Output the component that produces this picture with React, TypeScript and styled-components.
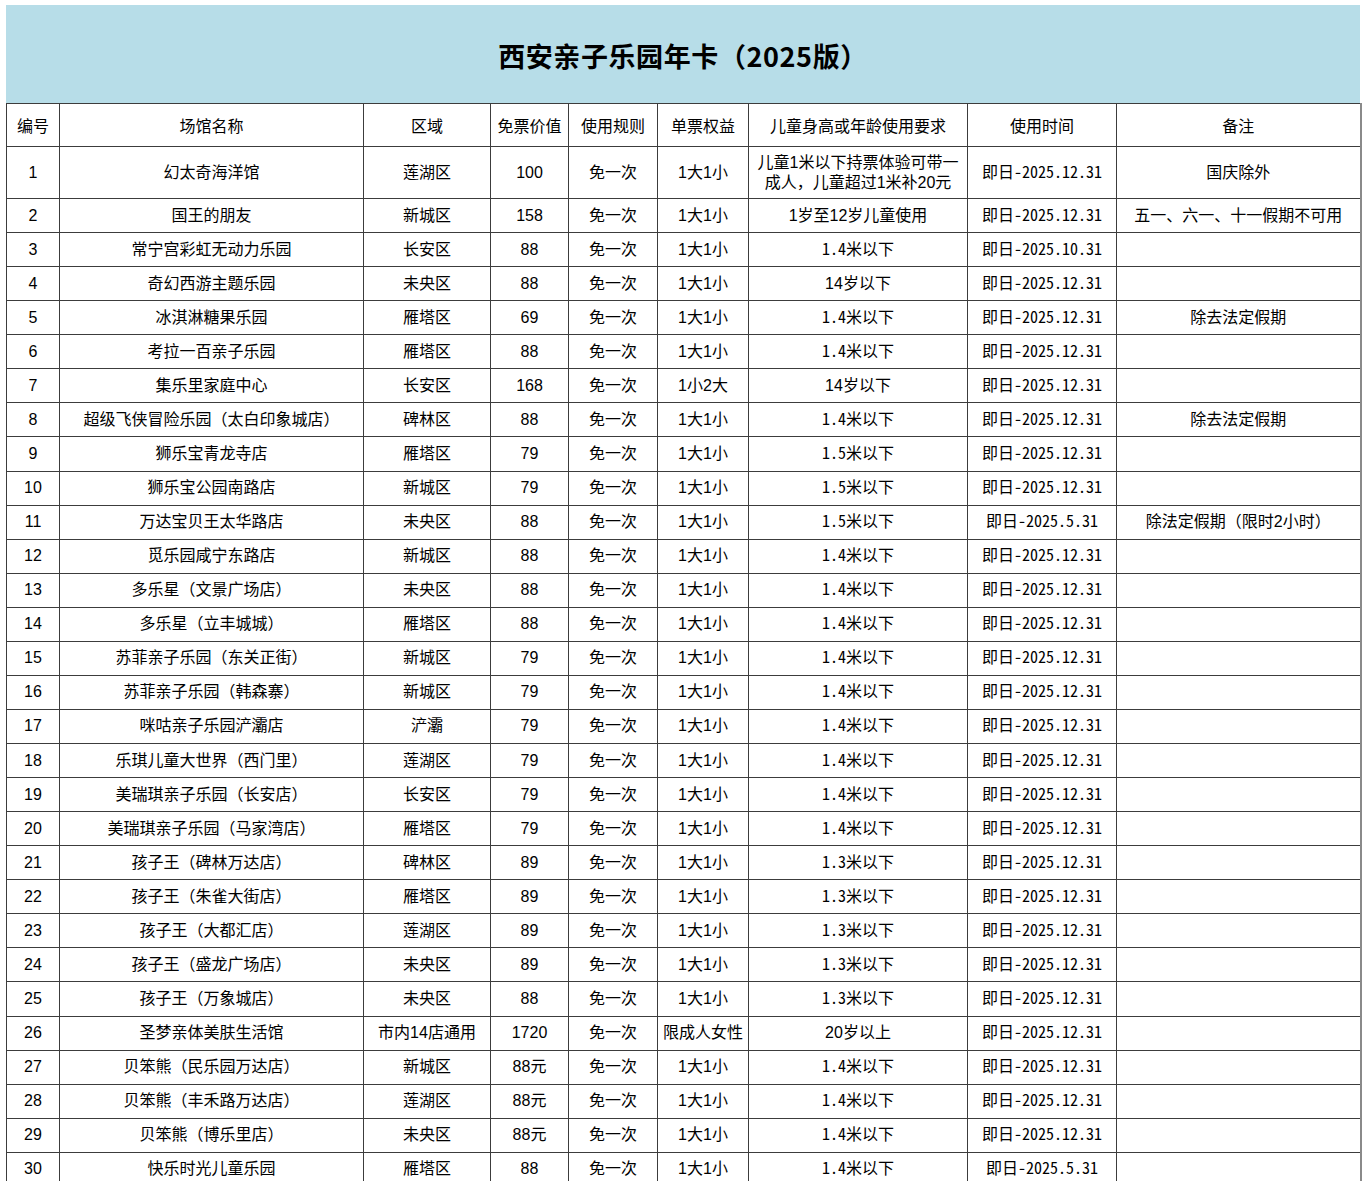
import React from "react";
import styled, { createGlobalStyle } from "styled-components";

const GlobalStyle = createGlobalStyle`
  html, body { margin: 0; padding: 0; background: #ffffff; }
  body { font-family: "Liberation Sans", "Noto Sans CJK SC", sans-serif; color: #000; }
`;

const Viewport = styled.div`
  height: 1181px;
  overflow: hidden;
`;

const Sheet = styled.div`
  width: 1354px;
  padding: 5px 0 0 6px;
`;

const TitleBand = styled.div`
  height: 98px;
  background: #b7dde8;
  display: flex;
  align-items: center;
  justify-content: center;
  font-family: "Noto Sans CJK SC", sans-serif;
  font-size: 27px;
  font-weight: 700;
  letter-spacing: 0.6px;
  padding-top: 2px;
  box-sizing: border-box;
`;

const Table = styled.table`
  width: 1354px;
  table-layout: fixed;
  border-collapse: collapse;
`;

const HeadRow = styled.tr`
  height: 43px;
`;

const Row = styled.tr<{ $tall?: boolean }>`
  height: ${(p) => (p.$tall ? "52px" : "34.07px")};
`;

const HeadCell = styled.th`
  border: 1px solid #3c3c3c;
  font-weight: 400;
  font-size: 16px;
  padding: 0 2px;
  text-align: center;
  vertical-align: middle;
  white-space: nowrap;
  &:last-child { border-right: 2px solid #8a8a8a; }
`;

const Cell = styled.td<{ $mono?: boolean }>`
  border: 1px solid #3c3c3c;
  font-size: 16px;
  line-height: 20px;
  padding: 0 4px ${(p) => (p.$mono ? "4px" : "0")};
  text-align: center;
  vertical-align: middle;
  font-family: ${(p) =>
    p.$mono
      ? `"Noto Sans Mono CJK SC", "Noto Sans CJK SC", sans-serif`
      : `"Liberation Sans", "Noto Sans CJK SC", sans-serif`};
  &:last-child { border-right: 2px solid #8a8a8a; }
`;

const widths = [53, 304, 127, 78, 89, 91, 219, 149, 244];
const headers = ["编号", "场馆名称", "区域", "免票价值", "使用规则", "单票权益", "儿童身高或年龄使用要求", "使用时间", "备注"];

type R = [string, string, string, string, string, string, string];
// name, area, price, benefit, requirement, time, note
const rows: R[] = [
  ["幻太奇海洋馆", "莲湖区", "100", "1大1小", "儿童1米以下持票体验可带一成人，儿童超过1米补20元", "即日-2025.12.31", "国庆除外"],
  ["国王的朋友", "新城区", "158", "1大1小", "1岁至12岁儿童使用", "即日-2025.12.31", "五一、六一、十一假期不可用"],
  ["常宁宫彩虹无动力乐园", "长安区", "88", "1大1小", "1.4米以下", "即日-2025.10.31", ""],
  ["奇幻西游主题乐园", "未央区", "88", "1大1小", "14岁以下", "即日-2025.12.31", ""],
  ["冰淇淋糖果乐园", "雁塔区", "69", "1大1小", "1.4米以下", "即日-2025.12.31", "除去法定假期"],
  ["考拉一百亲子乐园", "雁塔区", "88", "1大1小", "1.4米以下", "即日-2025.12.31", ""],
  ["集乐里家庭中心", "长安区", "168", "1小2大", "14岁以下", "即日-2025.12.31", ""],
  ["超级飞侠冒险乐园（太白印象城店）", "碑林区", "88", "1大1小", "1.4米以下", "即日-2025.12.31", "除去法定假期"],
  ["狮乐宝青龙寺店", "雁塔区", "79", "1大1小", "1.5米以下", "即日-2025.12.31", ""],
  ["狮乐宝公园南路店", "新城区", "79", "1大1小", "1.5米以下", "即日-2025.12.31", ""],
  ["万达宝贝王太华路店", "未央区", "88", "1大1小", "1.5米以下", "即日-2025.5.31", "除法定假期（限时2小时）"],
  ["觅乐园咸宁东路店", "新城区", "88", "1大1小", "1.4米以下", "即日-2025.12.31", ""],
  ["多乐星（文景广场店）", "未央区", "88", "1大1小", "1.4米以下", "即日-2025.12.31", ""],
  ["多乐星（立丰城城）", "雁塔区", "88", "1大1小", "1.4米以下", "即日-2025.12.31", ""],
  ["苏菲亲子乐园（东关正街）", "新城区", "79", "1大1小", "1.4米以下", "即日-2025.12.31", ""],
  ["苏菲亲子乐园（韩森寨）", "新城区", "79", "1大1小", "1.4米以下", "即日-2025.12.31", ""],
  ["咪咕亲子乐园浐灞店", "浐灞", "79", "1大1小", "1.4米以下", "即日-2025.12.31", ""],
  ["乐琪儿童大世界（西门里）", "莲湖区", "79", "1大1小", "1.4米以下", "即日-2025.12.31", ""],
  ["美瑞琪亲子乐园（长安店）", "长安区", "79", "1大1小", "1.4米以下", "即日-2025.12.31", ""],
  ["美瑞琪亲子乐园（马家湾店）", "雁塔区", "79", "1大1小", "1.4米以下", "即日-2025.12.31", ""],
  ["孩子王（碑林万达店）", "碑林区", "89", "1大1小", "1.3米以下", "即日-2025.12.31", ""],
  ["孩子王（朱雀大街店）", "雁塔区", "89", "1大1小", "1.3米以下", "即日-2025.12.31", ""],
  ["孩子王（大都汇店）", "莲湖区", "89", "1大1小", "1.3米以下", "即日-2025.12.31", ""],
  ["孩子王（盛龙广场店）", "未央区", "89", "1大1小", "1.3米以下", "即日-2025.12.31", ""],
  ["孩子王（万象城店）", "未央区", "88", "1大1小", "1.3米以下", "即日-2025.12.31", ""],
  ["圣梦亲体美肤生活馆", "市内14店通用", "1720", "限成人女性", "20岁以上", "即日-2025.12.31", ""],
  ["贝笨熊（民乐园万达店）", "新城区", "88元", "1大1小", "1.4米以下", "即日-2025.12.31", ""],
  ["贝笨熊（丰禾路万达店）", "莲湖区", "88元", "1大1小", "1.4米以下", "即日-2025.12.31", ""],
  ["贝笨熊（博乐里店）", "未央区", "88元", "1大1小", "1.4米以下", "即日-2025.12.31", ""],
  ["快乐时光儿童乐园", "雁塔区", "88", "1大1小", "1.4米以下", "即日-2025.5.31", ""],
];

export default function App() {
  return (
    <>
      <GlobalStyle />
      <Viewport>
        <Sheet>
          <TitleBand>西安亲子乐园年卡（2025版）</TitleBand>
          <Table>
            <colgroup>
              {widths.map((w, i) => (
                <col key={i} style={{ width: w }} />
              ))}
            </colgroup>
            <thead>
              <HeadRow>
                {headers.map((h) => (
                  <HeadCell key={h}>{h}</HeadCell>
                ))}
              </HeadRow>
            </thead>
            <tbody>
              {rows.map((r, i) => (
                <Row key={i} $tall={i === 0}>
                  <Cell>{i + 1}</Cell>
                  <Cell>{r[0]}</Cell>
                  <Cell>{r[1]}</Cell>
                  <Cell>{r[2]}</Cell>
                  <Cell>免一次</Cell>
                  <Cell>{r[3]}</Cell>
                  <Cell $mono={/^\d\.\d/.test(r[4])}>{r[4]}</Cell>
                  <Cell $mono>{r[5]}</Cell>
                  <Cell>{r[6]}</Cell>
                </Row>
              ))}
            </tbody>
          </Table>
        </Sheet>
      </Viewport>
    </>
  );
}
